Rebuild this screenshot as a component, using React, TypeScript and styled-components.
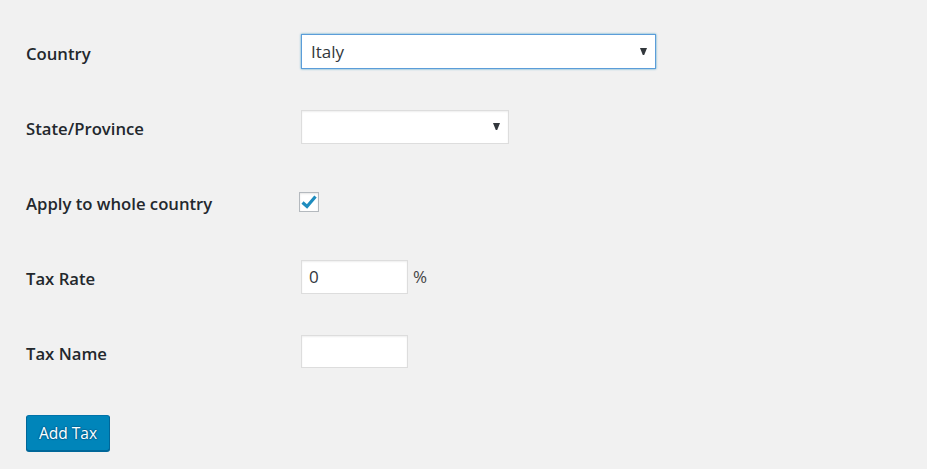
import React from "react";
import styled, { createGlobalStyle } from "styled-components";

const Global = createGlobalStyle`
  html, body { margin: 0; padding: 0; background: #f1f1f1; }
  body { font-family: "Open Sans", "Noto Sans", sans-serif; color: #23282d; }
`;

const Page = styled.div`
  width: 927px;
  height: 469px;
  box-sizing: border-box;
  padding: 14px 0 0 26px;
  background: #f1f1f1;
`;

const Form = styled.div`
  display: grid;
  grid-template-columns: 275px 1fr;
  grid-auto-rows: 75px;
  align-items: center;
`;

const Label = styled.div`
  font-size: 16.7px;
  font-weight: 600;
  color: #23282d;
  padding-top: 4px;
`;

const Field = styled.div`
  display: flex;
  align-items: center;
  gap: 5px;
`;

const SelectBox = styled.div<{ $w: number; $focus?: boolean; $h: number }>`
  box-sizing: border-box;
  width: ${(p) => p.$w}px;
  height: ${(p) => p.$h}px;
  background: #fff;
  border: 1px solid ${(p) => (p.$focus ? "#5b9dd9" : "#ddd")};
  box-shadow: ${(p) =>
    p.$focus ? "0 0 2px rgba(30,140,190,.8)" : "inset 0 1px 2px rgba(0,0,0,.07)"};
  display: flex;
  align-items: center;
  justify-content: space-between;
  padding: 0 8px 0 9px;
  font-size: 17px;
  color: #32373c;
`;

const Caret = styled.svg`
  width: 7px;
  height: 7px;
  fill: #32373c;
  flex: none;
`;

const Check = styled.div`
  box-sizing: border-box;
  width: 20px;
  height: 20px;
  margin-left: -2px;
  background: #fff;
  border: 1px solid #b4b9be;
  box-shadow: inset 0 1px 2px rgba(0, 0, 0, 0.1);
  display: flex;
  align-items: center;
  justify-content: center;
`;

const TextInput = styled.div<{ $h: number }>`
  box-sizing: border-box;
  width: 107px;
  height: ${(p) => p.$h}px;
  background: #fff;
  border: 1px solid #ddd;
  box-shadow: inset 0 1px 2px rgba(0, 0, 0, 0.07);
  display: flex;
  align-items: center;
  padding: 0 7px;
  font-size: 17px;
  color: #32373c;
`;

const Suffix = styled.span`
  font-size: 17px;
  color: #444;
`;

const Button = styled.button`
  margin-top: 26px;
  box-sizing: border-box;
  width: 84px;
  height: 36px;
  background: #0085ba;
  border: 1px solid;
  border-color: #0073aa #006799 #006799;
  border-radius: 3px;
  box-shadow: 0 1px 0 #006799;
  color: #fff;
  font-family: "Open Sans", "Noto Sans", sans-serif;
  font-size: 15.5px;
  padding: 0;
  text-shadow: 0 -1px 1px #006799, 1px 0 1px #006799, 0 1px 1px #006799, -1px 0 1px #006799;
`;

const CaretIcon = () => (
  <Caret viewBox="0 0 7 7">
    <path d="M0 0 H7 L4.2 7 H2.8 Z" />
  </Caret>
);

export default function App() {
  return (
    <>
      <Global />
      <Page>
        <Form>
          <Label>Country</Label>
          <Field>
            <SelectBox $w={355} $h={35} $focus>
              <span>Italy</span>
              <CaretIcon />
            </SelectBox>
          </Field>

          <Label>State/Province</Label>
          <Field>
            <SelectBox $w={208} $h={34}>
              <span />
              <CaretIcon />
            </SelectBox>
          </Field>

          <Label>Apply to whole country</Label>
          <Field>
            <Check>
              <svg width="16" height="14" viewBox="0 0 16 14">
                <path d="M1.5 7.5 L6 11.5 L14.5 1.5" fill="none" stroke="#1e8cbe" strokeWidth="3.2" />
              </svg>
            </Check>
          </Field>

          <Label>Tax Rate</Label>
          <Field>
            <TextInput $h={34}>0</TextInput>
            <Suffix>%</Suffix>
          </Field>

          <Label>Tax Name</Label>
          <Field>
            <TextInput $h={33} />
          </Field>
        </Form>
        <Button>Add Tax</Button>
      </Page>
    </>
  );
}
